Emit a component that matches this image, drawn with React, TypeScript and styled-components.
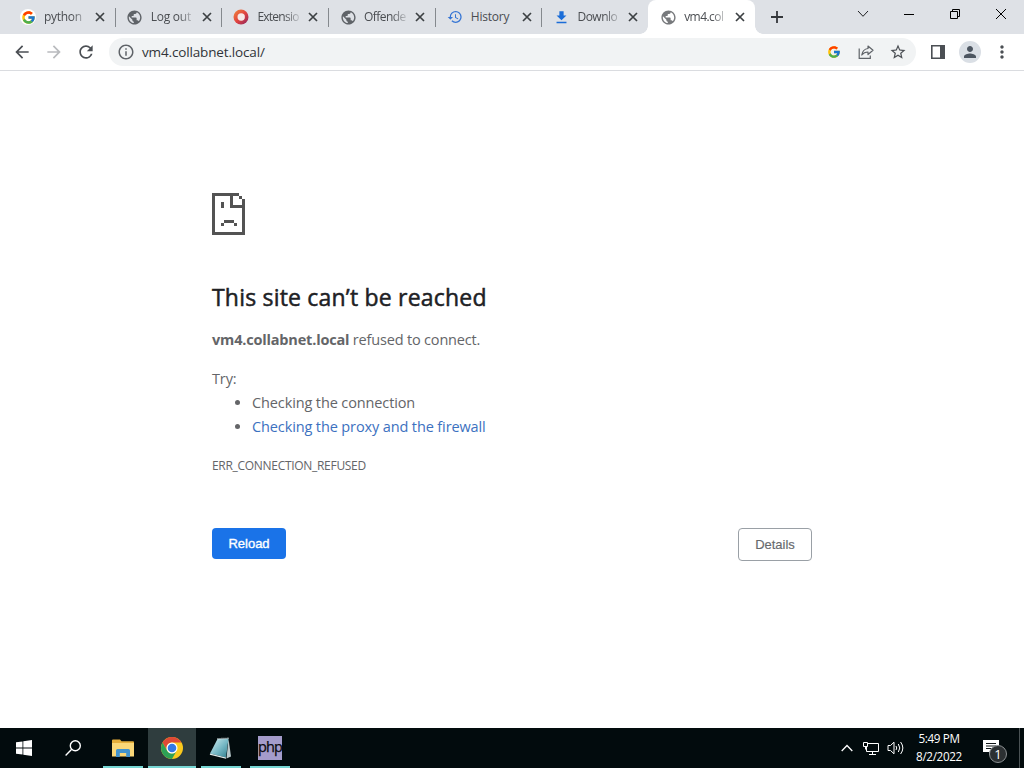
import type { ReactNode } from 'react';
import styled, { createGlobalStyle } from 'styled-components';
import {
  MdArrowBack,
  MdArrowForward,
  MdFileDownload,
  MdHistory,
  MdInfoOutline,
  MdMoreVert,
  MdPerson,
  MdPublic,
  MdRefresh,
  MdStarBorder,
} from 'react-icons/md';
import { FcGoogle } from 'react-icons/fc';

const GlobalStyle = createGlobalStyle`
  * {
    box-sizing: border-box;
  }

  body {
    margin: 0;
    background: #fff;
    font-family: 'Open Sans', 'Noto Sans', sans-serif;
    overflow: hidden;
  }

  svg {
    display: block;
    flex-shrink: 0;
  }
`;

const Screen = styled.div`
  display: flex;
  flex-direction: column;
  width: 1024px;
  height: 768px;
`;

/* ---------- tab strip ---------- */

const TabStrip = styled.header`
  display: flex;
  height: 34px;
  padding-left: 8px;
  background: #dee1e6;
`;

const TabBox = styled.div<{ $active?: boolean; $divider?: boolean }>`
  position: relative;
  display: flex;
  align-items: center;
  width: 106.7px;
  height: 34px;
  padding-left: 12px;
  border-radius: 8px 8px 0 0;
  background: ${({ $active }) => ($active ? '#fff' : 'transparent')};

  /* thin line between two inactive tabs */
  ${({ $divider }) => $divider && `
    &::after {
      content: '';
      position: absolute;
      right: -1px;
      top: 8px;
      width: 1px;
      height: 19px;
      background: #85898e;
    }
  `}

  /* curved feet of the selected tab */
  ${({ $active }) => $active && `
    &::before,
    &::after {
      content: '';
      position: absolute;
      bottom: 0;
      width: 8px;
      height: 8px;
    }
    &::before {
      left: -8px;
      background: radial-gradient(circle at 0 0, transparent 7.5px, #fff 8px);
    }
    &::after {
      right: -8px;
      background: radial-gradient(circle at 100% 0, transparent 7.5px, #fff 8px);
    }
  `}
`;

const Favicon = styled.span<{ $color?: string }>`
  display: flex;
  align-items: center;
  justify-content: center;
  width: 16px;
  height: 16px;
  color: ${({ $color }) => $color || '#5f6368'};
`;

const GoogleBadge = styled.span`
  display: flex;
  align-items: center;
  justify-content: center;
  width: 16px;
  height: 16px;
  border-radius: 50%;
  background: #fff;
`;

const TabTitle = styled.span<{ $spacing: number; $fade?: boolean }>`
  width: 43px;
  margin-left: 8px;
  overflow: hidden;
  white-space: nowrap;
  font-size: 12px;
  line-height: 18px;
  letter-spacing: ${({ $spacing }) => $spacing}px;
  color: #4a4d51;
  mask-image: ${({ $fade }) => ($fade ? 'linear-gradient(90deg, #000 64%, rgba(0, 0, 0, 0.2) 98%)' : 'none')};
`;

const TabClose = styled.span`
  display: flex;
  margin-left: 6px;
  color: #3c4043;
`;

const NewTab = styled.div`
  display: flex;
  align-items: center;
  margin-left: 16px;
`;

const WindowControls = styled.div`
  display: flex;
  height: 28px;
  margin-left: auto;
`;

const WindowButton = styled.div`
  display: flex;
  align-items: center;
  justify-content: center;
  width: 46px;
`;

/* ---------- toolbar ---------- */

const Toolbar = styled.div`
  display: flex;
  align-items: center;
  height: 37px;
  padding: 0 6px 0 6px;
  border-bottom: 1px solid #dadce0;
  background: #fff;
`;

const ToolButton = styled.span<{ $color?: string }>`
  display: flex;
  align-items: center;
  justify-content: center;
  flex-shrink: 0;
  width: 32px;
  height: 28px;
  color: ${({ $color }) => $color || '#4b4f54'};
`;

const Omnibox = styled.div`
  display: flex;
  align-items: center;
  width: 807px;
  height: 28px;
  margin: 0 6px 0 7px;
  padding: 0 2px 0 8px;
  border-radius: 14px;
  background: #f1f3f4;
  color: #5f6368;
`;

const Url = styled.span`
  flex: 1;
  margin-left: 7px;
  font-size: 13.5px;
  letter-spacing: -0.15px;
  color: #303338;
`;

const Avatar = styled.span`
  display: flex;
  align-items: center;
  justify-content: center;
  width: 22px;
  height: 22px;
  border-radius: 50%;
  background: #dadfe5;
  color: #4d5661;
`;

/* ---------- error page ---------- */

const Page = styled.main`
  flex: 1;
  width: 600px;
  margin: 0 auto;
  padding-top: 122px;
  color: #646568;
  font-size: 14.5px;
  line-height: 24px;
`;

const Heading = styled.h1`
  margin: 46px 0 0;
  font-size: 23px;
  font-weight: 400;
  line-height: 32px;
  letter-spacing: 0.2px;
  color: #202124;
  -webkit-text-stroke: 0.5px #202124;
`;

const Summary = styled.p`
  margin: 15px 0 0;
  letter-spacing: -0.18px;
`;

const Suggestions = styled.div`
  margin-top: 15px;
  letter-spacing: -0.12px;
`;

const SuggestionList = styled.ul`
  margin: 0;
  padding-left: 40px;
`;

const Suggestion = styled.li<{ $link?: boolean }>`
  span {
    color: ${({ $link }) => ($link ? '#3c71c0' : 'inherit')};
  }
`;

const ErrorCode = styled.div`
  margin-top: 15px;
  font-size: 12px;
  letter-spacing: -0.3px;
`;

const ButtonRow = styled.div`
  display: flex;
  justify-content: space-between;
  align-items: flex-start;
  margin-top: 50px;
`;

const Button = styled.button<{ $primary?: boolean }>`
  width: 74px;
  height: ${({ $primary }) => ($primary ? 31 : 33)}px;
  padding: 0;
  border: ${({ $primary }) => ($primary ? '0' : '1px solid #9aa0a6')};
  border-radius: 4px;
  background: ${({ $primary }) => ($primary ? '#1a73e8' : '#fff')};
  color: ${({ $primary }) => ($primary ? '#fff' : '#66696d')};
  font-family: 'Liberation Sans', Arial, sans-serif;
  font-size: 13px;
  -webkit-text-stroke: ${({ $primary }) => ($primary ? 0.35 : 0.15)}px currentColor;
`;

/* ---------- taskbar ---------- */

const Taskbar = styled.footer`
  display: flex;
  height: 40px;
  background: #020b0d;
`;

const TaskItem = styled.div<{ $width: number; $active?: boolean; $open?: boolean }>`
  display: flex;
  align-items: center;
  justify-content: center;
  width: ${({ $width }) => $width}px;
  background: ${({ $active }) => ($active ? '#2f3d3e' : 'transparent')};
  box-shadow: ${({ $active }) => ($active ? 'inset 0 -2px #76d6d3' : 'none')};

  ${({ $open }) => $open && `
    background: linear-gradient(#76d6d3, #76d6d3) center bottom / 40px 2px no-repeat;
  `}
`;

const PhpTile = styled.span`
  display: flex;
  justify-content: center;
  width: 24px;
  height: 24px;
  background: #a49ccb;
  color: #08080c;
  font-size: 14.5px;
  line-height: 22px;
  letter-spacing: -0.8px;
  -webkit-text-stroke: 0.25px #08080c;
`;

const Tray = styled.div`
  display: flex;
  align-items: center;
  width: 188px;
  margin-left: auto;
  color: #fff;
`;

const TrayIcon = styled.span<{ $width: number }>`
  display: flex;
  justify-content: center;
  width: ${({ $width }) => $width}px;
`;

const Clock = styled.div`
  width: 64px;
  padding-bottom: 3px;
  text-align: center;
  font-size: 11.7px;
  line-height: 18px;
  letter-spacing: -0.35px;
`;

const Notifications = styled.div`
  position: relative;
  width: 24px;
  height: 24px;
  margin-left: 11px;
`;

const Count = styled.span`
  position: absolute;
  left: 7px;
  top: 9px;
  width: 18px;
  height: 18px;
  border: 1px solid #8b9092;
  border-radius: 50%;
  background: #2b3032;
  font-size: 13px;
  line-height: 16px;
  text-align: center;
`;

const ShowDesktop = styled.div`
  align-self: stretch;
  width: 5px;
  margin-left: auto;
  border-left: 1px solid #4a5254;
`;

const CloseIcon = () => (
  <svg width="14" height="14" viewBox="0 0 14 14" stroke="currentColor" strokeWidth="1.7">
    <path d="M3 3l8 8M11 3l-8 8" />
  </svg>
);

const ExtensionIcon = () => (
  <svg width="16" height="16" viewBox="0 0 16 16">
    <defs>
      <linearGradient id="ring" x1="0" y1="0" x2="1" y2="1">
        <stop offset="0" stopColor="#f08a3c" />
        <stop offset="0.5" stopColor="#e2443f" />
        <stop offset="1" stopColor="#8a2460" />
      </linearGradient>
    </defs>
    <circle cx="8" cy="8" r="7.5" fill="url(#ring)" />
    <circle cx="8.2" cy="8" r="3.7" fill="#f6e9e7" />
  </svg>
);

const ShareIcon = () => (
  <svg width="16" height="16" viewBox="0 0 16 16" fill="none" stroke="#5f6368" strokeWidth="1.2">
    <path d="M1.2 4.5V14.3H12.3V11.5" />
    <path d="M10 2l5 4.3-5 4.2V8C7.2 8 5.2 9.1 3.8 11 4.3 7.6 6.3 5 10 4.5z" strokeLinejoin="round" />
  </svg>
);

const SidePanelIcon = () => (
  <svg width="14" height="14" viewBox="0 0 14 14">
    <path d="M.8.8h12.4v12.4H.8z" fill="none" stroke="#4b4f54" strokeWidth="1.6" />
    <path d="M9 0h5v14H9z" fill="#4b4f54" />
  </svg>
);

// sad page, drawn on whole pixels
const SadPageIcon = () => (
  <svg width="33" height="42" viewBox="0 0 33 42" fill="#535353" shapeRendering="crispEdges">
    <path d="M0 0H27V3H21V12H30V6H33V42H0ZM3 3V39H30V15H18V3Z" fillRule="evenodd" />
    <path d="M27 3h3v3h-3zM9 9h3v6H9zM12 27h10v3H12zM9 30h3v3H9zM22 30h3v3h-3z" />
  </svg>
);

const StartIcon = () => (
  <svg width="16" height="16" viewBox="0 0 16 16" fill="#fff">
    <path d="M0 2.3l6.5-.9v6.2H0zM7.3 1.3L16 0v7.6H7.3zM0 8.4h6.5v6.2L0 13.7zM7.3 8.4H16V16l-8.7-1.2z" />
  </svg>
);

const SearchIcon = () => (
  <svg width="16" height="16" viewBox="0 0 16 16" fill="none" stroke="#fff" strokeWidth="1.4">
    <circle cx="10.3" cy="5.7" r="5" />
    <path d="M6.7 9.3L.6 15.4" />
  </svg>
);

const ExplorerIcon = () => (
  <svg width="22" height="18" viewBox="0 0 22 18">
    <path d="M0 1.5Q0 .5 1 .5h7l1.5 1.7H21q1 0 1 1V17H0z" fill="#e5ae3b" />
    <path d="M0 4h22v13.5H0z" fill="#fad778" />
    <path d="M4 18v-6.5q0-1.5 1.5-1.5h11q1.5 0 1.5 1.5V18h-3.8v-4H7.8v4z" fill="#4293ce" />
  </svg>
);

const ChromeIcon = () => (
  <svg width="22" height="22" viewBox="0 0 22 22">
    <circle cx="11" cy="11" r="11" fill="#fbc91d" />
    <path d="M1.5 5.5A11 11 0 0 1 20.5 5.5H11A5.5 5.5 0 0 0 6.2 13.7z" fill="#df4936" />
    <path d="M1.5 5.5L6.2 13.75A5.5 5.5 0 0 0 15.7 13.75L11 22A11 11 0 0 1 1.5 5.5z" fill="#2da156" />
    <circle cx="11" cy="11" r="5.5" fill="#fff" />
    <circle cx="11" cy="11" r="4.3" fill="#3478e5" />
  </svg>
);

const NotepadIcon = () => (
  <svg width="24" height="24" viewBox="0 0 24 24">
    <defs>
      <linearGradient id="cover" x1="0" y1="0" x2="1" y2="1">
        <stop offset="0" stopColor="#d6f1f3" />
        <stop offset="0.55" stopColor="#75b7c4" />
        <stop offset="1" stopColor="#317e8d" />
      </linearGradient>
    </defs>
    <path d="M19.5 2.5L22 20.5l-4.5 2z" fill="#b8c8cb" />
    <path d="M8.5 3l11-.5L17 21.5 1 17.5z" fill="url(#cover)" />
    <path d="M1 17.5L17 21.5v1.2L.8 18.7z" fill="#e3eeee" />
    <path d="M8.5 2.8l11-.5" stroke="#dfe7e8" strokeWidth="1.5" strokeDasharray="1 1" />
  </svg>
);

interface TabInfo {
  title: string;
  icon: ReactNode;
  spacing: number;
  color?: string;
  fade?: boolean;
}

const tabs: TabInfo[] = [
  { title: 'python', icon: <GoogleBadge><FcGoogle size={15} /></GoogleBadge>, spacing: -0.3, fade: true },
  { title: 'Log out', icon: <MdPublic size={17} />, spacing: -0.25, fade: true },
  { title: 'Extensio', icon: <ExtensionIcon />, spacing: -0.75, fade: true },
  { title: 'Offende', icon: <MdPublic size={17} />, spacing: -0.55, fade: true },
  { title: 'History', icon: <MdHistory size={16} />, color: '#3474d4', spacing: -0.2 },
  { title: 'Downlo', icon: <MdFileDownload size={17} />, color: '#1b6dd8', spacing: -0.5, fade: true },
  { title: 'vm4.col', icon: <MdPublic size={17} />, color: '#77797c', spacing: -0.55, fade: true },
];

export default function App() {
  const activeIndex = tabs.length - 1;

  return (
    <Screen>
      <GlobalStyle />
      <TabStrip>
        {tabs.map((tab, i) => (
          <TabBox key={tab.title} $active={i === activeIndex} $divider={i < activeIndex - 1}>
            <Favicon $color={tab.color}>{tab.icon}</Favicon>
            <TabTitle $spacing={tab.spacing} $fade={tab.fade}>{tab.title}</TabTitle>
            <TabClose><CloseIcon /></TabClose>
          </TabBox>
        ))}
        <NewTab>
          <svg width="12" height="12" viewBox="0 0 12 12" stroke="#34373b" strokeWidth="1.8">
            <path d="M6 0v12M0 6h12" />
          </svg>
        </NewTab>
        <WindowControls>
          <WindowButton>
            <svg width="12" height="8" viewBox="0 0 12 8" fill="none" stroke="#202124">
              <path d="M1 1l5 5.3L11 1" />
            </svg>
          </WindowButton>
          <WindowButton>
            <svg width="10" height="1"><path d="M0 0h10v1H0z" fill="#000" /></svg>
          </WindowButton>
          <WindowButton>
            <svg width="10" height="10" viewBox="0 0 10 10" fill="none" stroke="#000">
              <path d="M.5 2.5h7v7h-7zM2.5 2.5v-2h7v7h-2" />
            </svg>
          </WindowButton>
          <WindowButton>
            <svg width="10" height="10" viewBox="0 0 10 10" stroke="#000">
              <path d="M0 0l10 10M10 0L0 10" />
            </svg>
          </WindowButton>
        </WindowControls>
      </TabStrip>

      <Toolbar>
        <ToolButton><MdArrowBack size={20} /></ToolButton>
        <ToolButton $color="#b9bbbe"><MdArrowForward size={20} /></ToolButton>
        <ToolButton><MdRefresh size={20} /></ToolButton>
        <Omnibox>
          <MdInfoOutline size={18} />
          <Url>vm4.collabnet.local/</Url>
          <ToolButton><FcGoogle size={14} /></ToolButton>
          <ToolButton><ShareIcon /></ToolButton>
          <ToolButton><MdStarBorder size={18} /></ToolButton>
        </Omnibox>
        <ToolButton><SidePanelIcon /></ToolButton>
        <ToolButton><Avatar><MdPerson size={18} /></Avatar></ToolButton>
        <ToolButton><MdMoreVert size={20} /></ToolButton>
      </Toolbar>

      <Page>
        <SadPageIcon />
        <Heading>This site can’t be reached</Heading>
        <Summary><strong>vm4.collabnet.local</strong> refused to connect.</Summary>
        <Suggestions>
          Try:
          <SuggestionList>
            <Suggestion><span>Checking the connection</span></Suggestion>
            <Suggestion $link><span>Checking the proxy and the firewall</span></Suggestion>
          </SuggestionList>
        </Suggestions>
        <ErrorCode>ERR_CONNECTION_REFUSED</ErrorCode>
        <ButtonRow>
          <Button $primary>Reload</Button>
          <Button>Details</Button>
        </ButtonRow>
      </Page>

      <Taskbar>
        <TaskItem $width={48}><StartIcon /></TaskItem>
        <TaskItem $width={50}><SearchIcon /></TaskItem>
        <TaskItem $width={50} $open><ExplorerIcon /></TaskItem>
        <TaskItem $width={48} $active><ChromeIcon /></TaskItem>
        <TaskItem $width={50} $open><NotepadIcon /></TaskItem>
        <TaskItem $width={48} $open><PhpTile>php</PhpTile></TaskItem>
        <Tray>
          <TrayIcon $width={22}>
            <svg width="12" height="8" viewBox="0 0 12 8" fill="none" stroke="#fff" strokeWidth="1.3">
              <path d="M.7 7L6 1.5 11.3 7" />
            </svg>
          </TrayIcon>
          <TrayIcon $width={26}>
            <svg width="17" height="15" viewBox="0 0 17 15" fill="none" stroke="#fff">
              <path d="M5 2.5h10.5v8H3.5V6M9.5 10.5v3M6 13.5h7" />
              <path d="M.5 1.5h4v4h-4zM2.5 5.5v3" />
            </svg>
          </TrayIcon>
          <TrayIcon $width={23}>
            <svg width="18" height="14" viewBox="0 0 18 14" fill="none" stroke="#fff">
              <path d="M1 4.5h2.5L7 1.2v11.6L3.5 9.5H1z" />
              <path d="M9 5q1.5 2 0 4M11.3 3q3 4 0 8M13.6 1q4.5 6 0 12" />
            </svg>
          </TrayIcon>
          <Clock>
            <div>5:49 PM</div>
            <div>8/2/2022</div>
          </Clock>
          <Notifications>
            <svg width="18" height="20" viewBox="0 0 18 20">
              <path d="M1 4h16v12h-7l-3 3.5V16H1z" fill="#fff" />
              <path d="M4 7.5h10M4 10h10M4 12.5h6" stroke="#101618" />
            </svg>
            <Count>1</Count>
          </Notifications>
          <ShowDesktop />
        </Tray>
      </Taskbar>
    </Screen>
  );
}
